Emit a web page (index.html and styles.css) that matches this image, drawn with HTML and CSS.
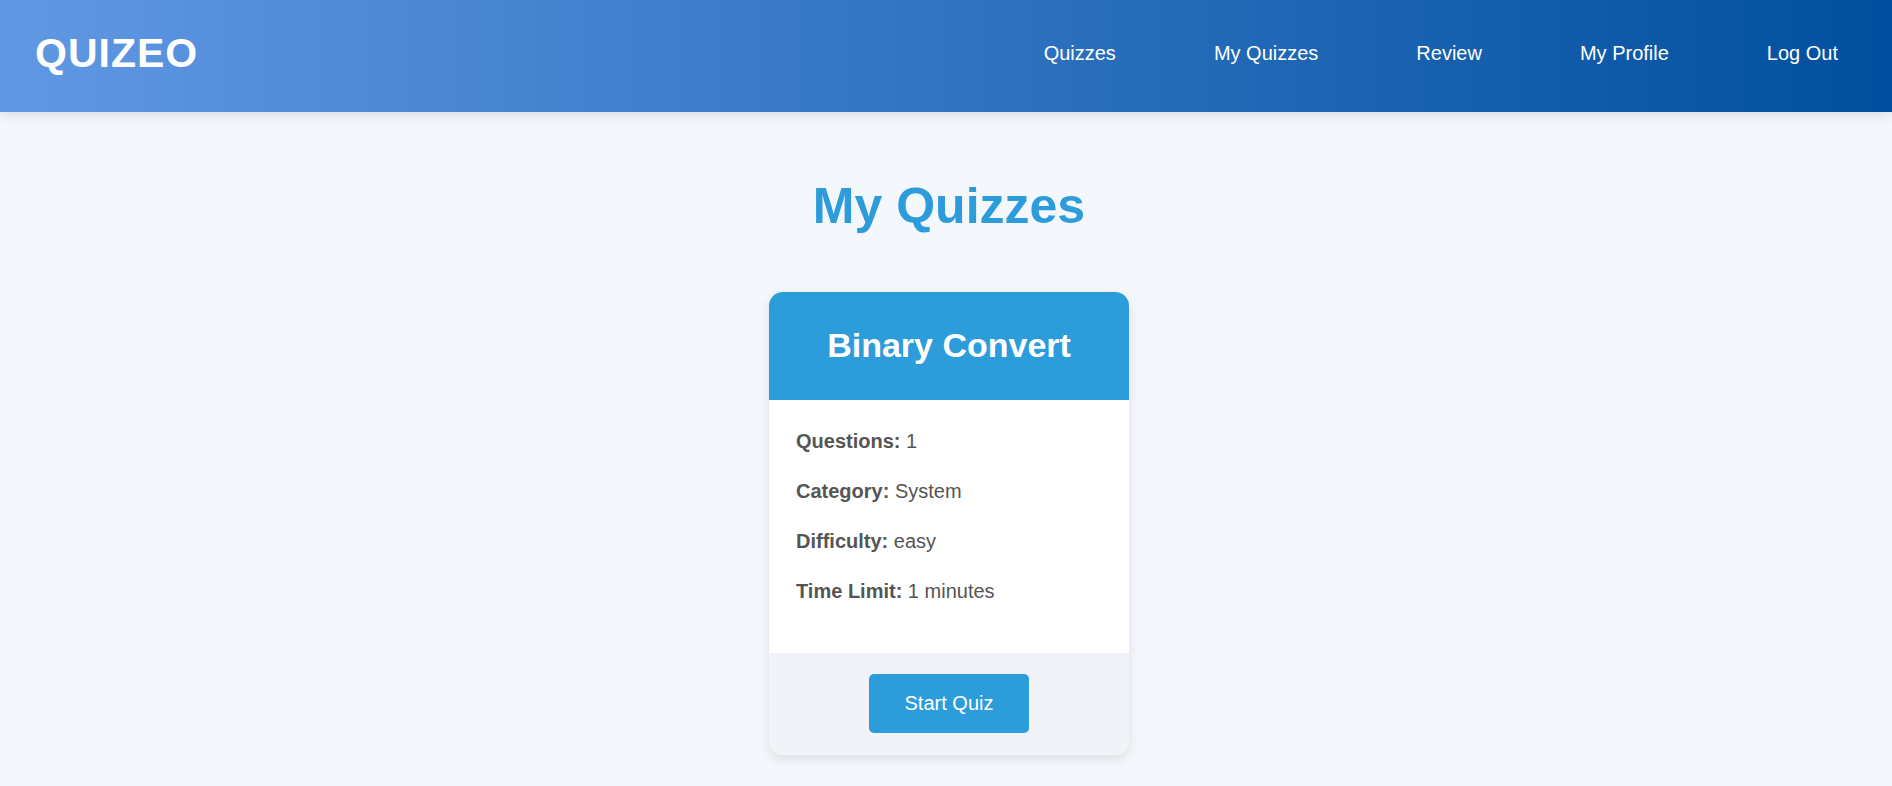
FILE: index.html
```html
<!DOCTYPE html>
<html lang="en">
<head>
<meta charset="utf-8">
<meta name="viewport" content="width=device-width, initial-scale=1">
<title>My Quizzes - Quizeo</title>
<link rel="stylesheet" href="styles.css">
</head>
<body>
<header class="site-header">
  <div class="logo">QUIZEO</div>
  <nav class="nav">
    <a href="#quizzes">Quizzes</a>
    <a href="#my-quizzes">My Quizzes</a>
    <a href="#review">Review</a>
    <a href="#profile">My Profile</a>
    <a href="#logout">Log Out</a>
  </nav>
</header>
<main class="page">
  <h1 class="page-title">My Quizzes</h1>
  <div class="quiz-list">
    <article class="card">
      <h2 class="card-title">Binary Convert</h2>
      <div class="card-body">
        <p><strong>Questions:</strong> 1</p>
        <p><strong>Category:</strong> System</p>
        <p><strong>Difficulty:</strong> easy</p>
        <p><strong>Time Limit:</strong> 1 minutes</p>
      </div>
      <footer class="card-footer">
        <button class="start" type="button">Start Quiz</button>
      </footer>
    </article>
  </div>
</main>
</body>
</html>
```
FILE: styles.css
```css
* {
  box-sizing: border-box;
}

body {
  margin: 0;
  background: #f4f7fc;
  color: #555;
  font-family: "Liberation Sans", Arial, sans-serif;
  font-size: 20px;
  line-height: 30px;
}

.site-header {
  display: flex;
  align-items: center;
  justify-content: space-between;
  padding: 23px 54px 29px 35px;
  background: linear-gradient(90deg, #6198e4, #004f9e);
  box-shadow: 0 4px 12px rgba(0, 0, 0, 0.1);
}

.logo {
  color: #fff;
  font-size: 41px;
  font-weight: bold;
  line-height: 60px;
  letter-spacing: 1px;
}

.nav {
  display: flex;
  gap: 98px;
}

.nav a {
  color: #fff;
  text-decoration: none;
}

.page {
  padding: 57px 20px 31px 26px;
}

.page-title {
  margin: 0 0 49px;
  color: #2d9cdb;
  font-size: 50px;
  line-height: 74px;
  text-align: center;
}

.quiz-list {
  display: flex;
  flex-wrap: wrap;
  justify-content: center;
  gap: 30px;
}

.card {
  width: 360px;
  overflow: hidden;
  border-radius: 14px;
  background: #fff;
  box-shadow: 0 4px 12px rgba(0, 0, 0, 0.1);
}

.card-title {
  margin: 0;
  padding: 28px 20px 30px;
  background: #2d9cdb;
  color: #fff;
  font-size: 34px;
  line-height: 50px;
  text-align: center;
}

.card-body {
  padding: 26px 27px 47px;
}

.card-body p {
  margin: 0 0 20px;
}

.card-body p:last-child {
  margin-bottom: 0;
}

.card-footer {
  display: flex;
  justify-content: center;
  padding: 21px 20px 22px;
  background: #f1f3f8;
}

.start {
  padding: 14px 36px 15px;
  border: 0;
  border-radius: 5px;
  background: #2d9cdb;
  color: #fff;
  font: inherit;
  cursor: pointer;
}
```
